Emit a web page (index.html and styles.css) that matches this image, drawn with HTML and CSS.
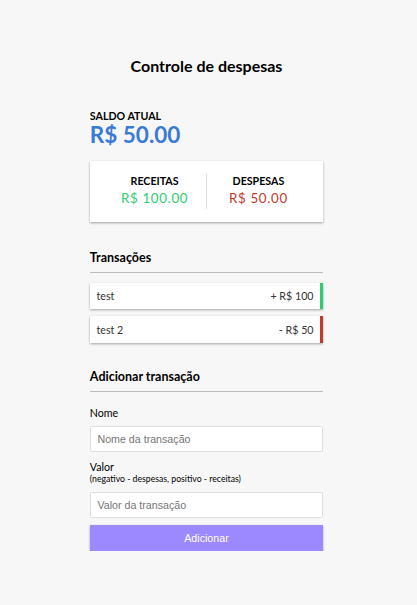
FILE: index.html
```html
<!DOCTYPE html>
<html lang="pt-BR">
<head>
<meta charset="utf-8">
<title>Controle de despesas</title>
<link rel="stylesheet" href="styles.css">
</head>
<body>
<div class="container">
  <h2 class="title">Controle de despesas</h2>

  <h4 class="balance-label">Saldo atual</h4>
  <h1 class="balance">R$ 50.00</h1>

  <div class="inc-exp">
    <div class="inc-exp-col">
      <h4 class="col-label">Receitas</h4>
      <p class="money plus">R$ 100.00</p>
    </div>
    <div class="inc-exp-col">
      <h4 class="col-label">Despesas</h4>
      <p class="money minus">R$ 50.00</p>
    </div>
  </div>

  <h3 class="section-title section-trans">Transações</h3>
  <ul class="list">
    <li class="item plus"><span>test</span><span>+ R$ 100</span></li>
    <li class="item minus"><span>test 2</span><span>- R$ 50</span></li>
  </ul>

  <h3 class="section-title section-add">Adicionar transação</h3>
  <form class="form">
    <label class="label label-name" for="text">Nome</label>
    <input class="field field-name" type="text" id="text" placeholder="Nome da transação">
    <label class="label label-value" for="amount">Valor</label>
    <span class="hint">(negativo - despesas, positivo - receitas)</span>
    <input class="field field-value" type="number" id="amount" placeholder="Valor da transação">
    <button class="btn" type="button">Adicionar</button>
  </form>
</div>
</body>
</html>
```

FILE: styles.css
```css
* {
  box-sizing: border-box;
}

html, body {
  margin: 0;
  background-color: #f7f7f7;
}

body {
  font-family: "Lato", "Noto Sans", sans-serif;
  padding: 0 4px 0 0;
}

.container {
  width: 233.33px;
  margin: 0 auto;
  padding-top: 55.5px;
  display: flex;
  flex-direction: column;
}

.title {
  margin: 0;
  font-size: 16px;
  line-height: 20px;
  font-weight: 700;
  text-align: center;
  color: #000;
}

.balance-label {
  margin: 34.5px 0 0;
  font-size: 10.67px;
  line-height: 12px;
  font-weight: 700;
  text-transform: uppercase;
  color: #000;
}

.balance {
  margin: 0;
  font-size: 22.5px;
  line-height: 26px;
  font-weight: 700;
  letter-spacing: 0;
  color: #3a7bd5;
}

.inc-exp {
  margin-top: 13px;
  background-color: #fff;
  box-shadow: 0 1px 3px rgba(0, 0, 0, 0.12), 0 1px 2px rgba(0, 0, 0, 0.24);
  padding: 13.33px;
  display: flex;
}

.inc-exp-col {
  flex: 1;
  text-align: center;
}

.inc-exp-col:first-child {
  border-right: 1px solid #dedede;
}

.col-label {
  margin: 0;
  font-size: 10.67px;
  line-height: 13px;
  font-weight: 700;
  text-transform: uppercase;
  color: #000;
}

.money {
  margin: 3.33px 0;
  font-size: 13.33px;
  line-height: 15px;
  letter-spacing: 0.67px;
}

.money.plus {
  color: #2ecc71;
}

.money.minus {
  color: #c0392b;
}

.section-title {
  margin: 0;
  font-size: 12.5px;
  line-height: 15px;
  font-weight: 700;
  color: #000;
  padding-bottom: 6.67px;
  border-bottom: 1px solid #bbb;
}

.section-trans {
  margin-top: 27.7px;
}

.section-add {
  margin-top: 26.3px;
}

.list {
  list-style: none;
  margin: 10px 0 0;
  padding: 0;
  display: flex;
  flex-direction: column;
  gap: 6.67px;
}

.item {
  background-color: #fff;
  box-shadow: 0 1px 3px rgba(0, 0, 0, 0.12), 0 1px 2px rgba(0, 0, 0, 0.24);
  color: #333;
  display: flex;
  justify-content: space-between;
  padding: 6.67px;
  font-size: 10.67px;
  line-height: 13.33px;
}

.item.plus {
  border-right: 3.33px solid #2ecc71;
}

.item.minus {
  border-right: 3.33px solid #c0392b;
}

.form {
  display: flex;
  flex-direction: column;
}

.label {
  font-size: 10.67px;
  line-height: 13px;
  color: #000;
}

.label-name {
  margin-top: 14.3px;
}

.label-value {
  margin-top: 8.3px;
}

.hint {
  font-size: 8.7px;
  line-height: 11px;
  color: #000;
}

.field {
  display: block;
  width: 100%;
  height: 26px;
  border: 1px solid #dedede;
  border-radius: 1.33px;
  padding: 0 6.67px;
  font-family: "Liberation Sans", Arial, sans-serif;
  font-size: 10.67px;
  background: #fff;
  color: #000;
  outline: none;
}

.field::placeholder {
  color: #757575;
}

.field-name {
  margin-top: 6.7px;
}

.field-value {
  margin-top: 8px;
  -moz-appearance: textfield;
}

.field-value::-webkit-outer-spin-button,
.field-value::-webkit-inner-spin-button {
  -webkit-appearance: none;
  margin: 0;
}

.btn {
  margin-top: 7px;
  display: block;
  width: 100%;
  height: 26px;
  border: 0;
  background-color: #9c88ff;
  box-shadow: 0 1px 3px rgba(0, 0, 0, 0.12), 0 1px 2px rgba(0, 0, 0, 0.24);
  color: #fff;
  font-family: "Liberation Sans", Arial, sans-serif;
  font-size: 10.67px;
  cursor: pointer;
  padding: 0;
}
```
